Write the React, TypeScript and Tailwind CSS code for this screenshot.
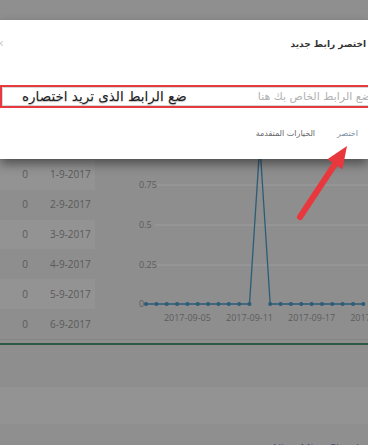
import React from "react";

const rows = [
  { count: "0", date: "1-9-2017" },
  { count: "0", date: "2-9-2017" },
  { count: "0", date: "3-9-2017" },
  { count: "0", date: "4-9-2017" },
  { count: "0", date: "5-9-2017" },
  { count: "0", date: "6-9-2017" },
];

const arabic = { fontFamily: '"DejaVu Sans", sans-serif' };
const latin = { fontFamily: '"Open Sans", "Noto Sans", sans-serif' };

// chart points: one per day from 2017-09-01, a single hit on 09-12
const points = Array.from({ length: 22 }, (_, i) => ({
  x: 51 + i * 10.35,
  y: i === 11 ? -15 : 145,
}));

const Chart: React.FC = () => {
  const grid = [
    { label: "0.75", y: 26 },
    { label: "0.5", y: 66 },
    { label: "0.25", y: 106 },
  ];
  const line = points.map((p) => `${p.x},${p.y}`).join(" ");
  return (
    <svg width="273" height="181" className="overflow-visible" style={latin}>
      {grid.map((g) => (
        <g key={g.label}>
          <line x1="60" x2="273" y1={g.y} y2={g.y} stroke="#9d9d9d" strokeWidth="1" />
          <text x="44" y={g.y + 3} fontSize="9" fill="#5c5c5c">
            {g.label}
          </text>
        </g>
      ))}
      <text x="44" y="148" fontSize="9" fill="#5c5c5c">
        0
      </text>
      <polyline points={line} fill="none" stroke="#2b5c78" strokeWidth="1.3" />
      {points
        .filter((p) => p.y > 0)
        .map((p, i) => (
          <circle key={i} cx={p.x} cy={p.y} r="2" fill="#2b5c78" />
        ))}
      {[
        { label: "2017-09-05", x: 92.4 },
        { label: "2017-09-11", x: 154.5 },
        { label: "2017-09-17", x: 216.6 },
        { label: "2017-09-23", x: 278.7 },
      ].map((t) => (
        <text key={t.label} x={t.x} y="162" fontSize="9" fill="#5c5c5c" textAnchor="middle">
          {t.label}
        </text>
      ))}
    </svg>
  );
};

const App: React.FC = () => {
  return (
    <div className="relative w-[368px] h-[445px] overflow-hidden bg-[#8e8e8e] flex flex-col">
      {/* dimmed top of page */}
      <div className="h-[20px] shrink-0 bg-[#8f8f8f]" />

      {/* modal */}
      <div className="relative z-10 h-[139px] shrink-0 bg-white shadow-[0_5px_10px_rgba(0,0,0,0.45)] flex flex-col">
        <div className="mt-[17px] h-[14px] flex items-center justify-between pr-[2px]">
          <span className="text-[12px] leading-none text-[#c8c8c8] -ml-[3px]" style={latin}>
            ×
          </span>
          <span dir="rtl" className="text-[9px] leading-none font-bold text-[#333]" style={arabic}>
            اختصر رابط جديد
          </span>
        </div>

        <div className="mt-[34px] h-[23px] -mr-[8px] border-2 border-[#e63a3f]">
          <div className="h-full border border-[#d6d6d6] bg-white flex items-center justify-between">
            <span
              dir="rtl"
              className="pl-[19px] text-[13.5px] leading-none text-[#1e1e1e] [text-shadow:0_1px_1px_rgba(0,0,0,0.25)]"
              style={arabic}
            >
              ضع الرابط الذى تريد اختصاره
            </span>
            <span dir="rtl" className="pr-[2px] text-[11px] leading-none text-[#b2b2b2]" style={arabic}>
              ضع الرابط الخاص بك هنا
            </span>
          </div>
        </div>

        <div dir="rtl" className="mt-[20px] flex items-center gap-[22px] pr-[10px]" style={arabic}>
          <span className="text-[8px] text-[#7a8fa3]">اختصر</span>
          <span className="text-[8px] text-[#666]">الخيارات المتقدمة</span>
        </div>
      </div>

      {/* dimmed page: stats table and chart */}
      <div className="h-[181px] shrink-0 flex border-b border-[#858585]">
        <div className="w-[95px] pt-[1px] flex flex-col" style={latin}>
          {rows.map((r, i) => (
            <div
              key={r.date}
              className={`h-[30px] flex items-center text-[10px] text-[#5a5a5a] ${i % 2 === 0 ? "bg-[#939393]" : ""}`}
            >
              <span className="w-[50px] text-center">{r.count}</span>
              <span>{r.date}</span>
            </div>
          ))}
        </div>
        <Chart />
      </div>

      <div className="mt-[3px] h-[2px] shrink-0 bg-[#2c5a44]" />
      <div className="h-[42px] shrink-0 bg-[#8e8e8e]" />
      <div className="h-[37px] shrink-0 bg-[#939393]" />
      <div className="flex-1 bg-[#8f8f8f] pl-[273px] pt-[10px]">
        <span className="whitespace-nowrap text-[11px] text-[#4b4b78]" style={latin}>
          Nine-Mine Cloud mining
        </span>
      </div>

      {/* red annotation arrow */}
      <svg className="absolute inset-0 z-20 pointer-events-none" width="368" height="445">
        <line x1="300" y1="217" x2="337" y2="161" stroke="#e8383d" strokeWidth="6" strokeLinecap="round" />
        <polygon points="347,146 342.4,169.3 327.4,159.3" fill="#e8383d" />
      </svg>
    </div>
  );
};

export default App;
